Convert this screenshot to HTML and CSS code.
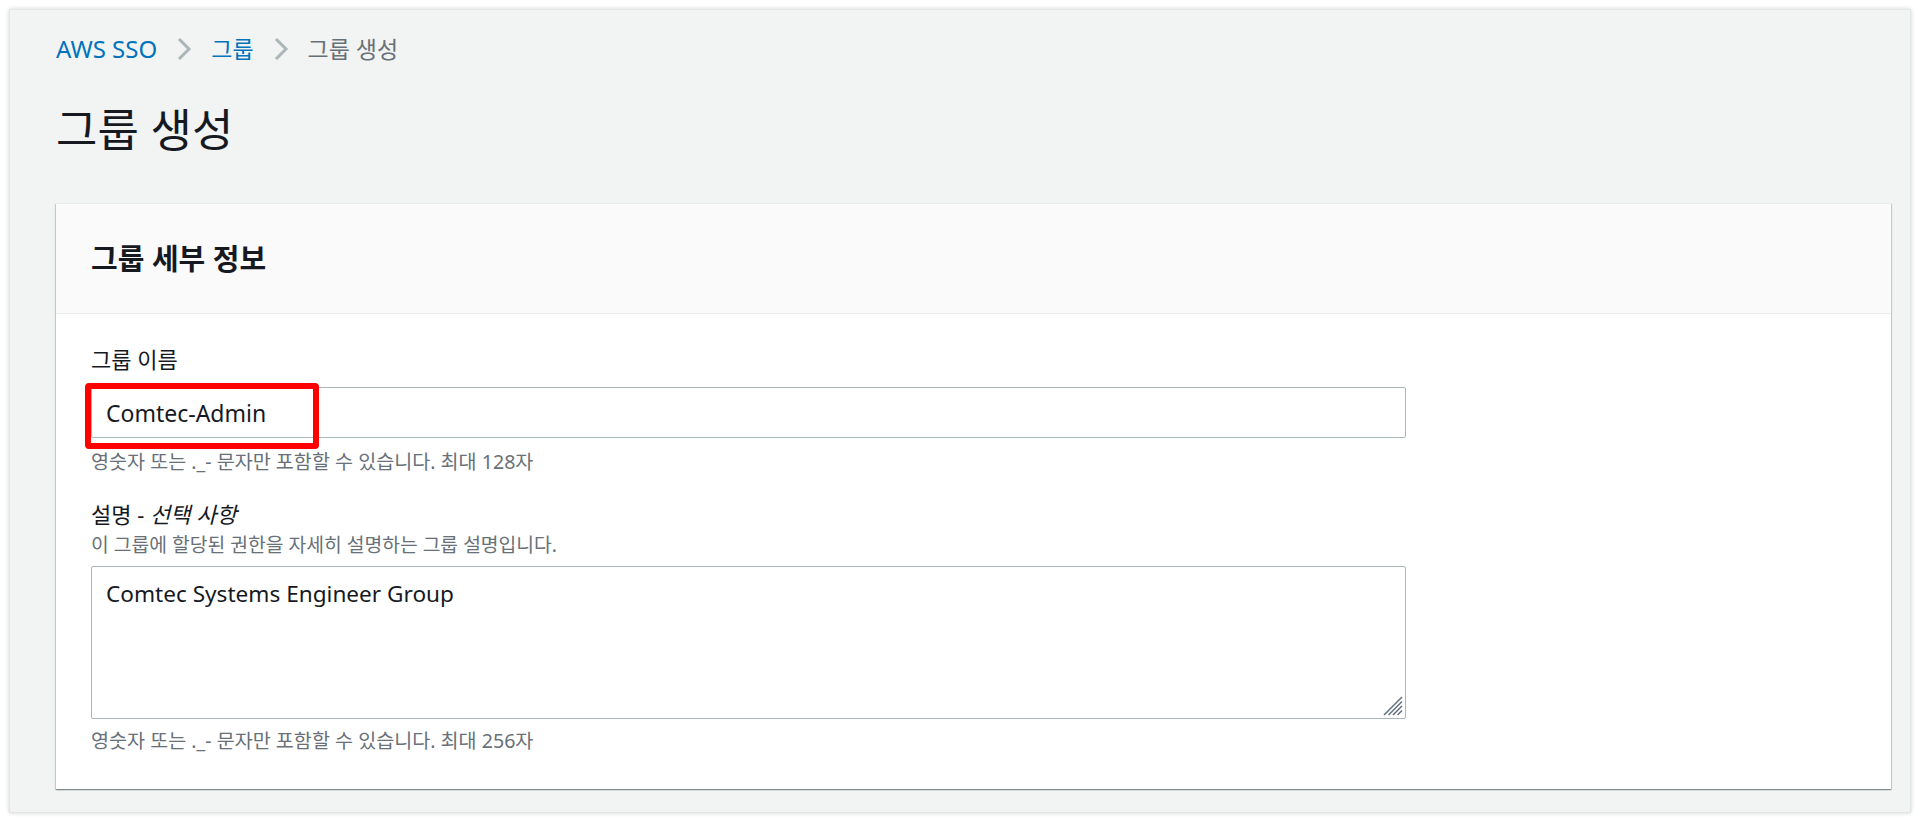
FILE: index.html
```html
<!DOCTYPE html>
<html lang="ko">
<head>
    <meta charset="UTF-8">
    <meta name="viewport" content="width=device-width, initial-scale=1.0">
    <title>그룹 생성</title>
    <link rel="stylesheet" href="styles.css">
</head>
<body>

<div class="frame">
    <nav class="breadcrumb">
        <a href="#" class="root">AWS SSO</a>
        <svg class="chevron" width="16" height="26" viewBox="0 0 16 26"><polyline points="3,3 13,13 3,23" fill="none" stroke="#aab7b8" stroke-width="3"/></svg>
        <a href="#">그룹</a>
        <svg class="chevron" width="16" height="26" viewBox="0 0 16 26"><polyline points="3,3 13,13 3,23" fill="none" stroke="#aab7b8" stroke-width="3"/></svg>
        <span class="current">그룹 생성</span>
    </nav>

    <h1>그룹 생성</h1>

    <div class="card">
        <div class="card-header">
            <h2>그룹 세부 정보</h2>
        </div>
        <form class="card-body">
            <label for="groupName">그룹 이름</label>
            <div class="field">
                <input type="text" id="groupName" name="groupName" value="Comtec-Admin">
                <div class="highlight"></div>
            </div>
            <p class="hint">영숫자 또는 ._- 문자만 포함할 수 있습니다. 최대 128자</p>

            <label for="description" class="label-second">설명 - <i>선택 사항</i></label>
            <p class="desc">이 그룹에 할당된 권한을 자세히 설명하는 그룹 설명입니다.</p>
            <div class="field">
                <textarea id="description" name="description">Comtec Systems Engineer Group</textarea>
                <svg class="grip" width="20" height="20" viewBox="0 0 20 20">
                    <line x1="1" y1="19" x2="19" y2="1" stroke="#5f6b7a" stroke-width="1.5"/>
                    <line x1="5.5" y1="19" x2="19" y2="5.5" stroke="#5f6b7a" stroke-width="1.5"/>
                    <line x1="10" y1="19" x2="19" y2="10" stroke="#5f6b7a" stroke-width="1.5"/>
                    <line x1="14.5" y1="19" x2="19" y2="14.5" stroke="#5f6b7a" stroke-width="1.5"/>
                </svg>
            </div>
            <p class="hint hint-last">영숫자 또는 ._- 문자만 포함할 수 있습니다. 최대 256자</p>
        </form>
    </div>
</div>

</body>
</html>
```

FILE: styles.css
```css
body {
    font-family: "Noto Sans", "Noto Sans CJK KR", sans-serif;
    margin: 0;
    padding: 0;
    background-color: #fff;
    color: #16191f;
}

.frame {
    box-sizing: border-box;
    margin: 9px;
    width: 1902px;
    height: 804px;
    padding: 24px 19px 0 46px;
    background-color: #f2f3f3;
    border: 1px solid #e3e6e6;
    box-shadow: 0 0 4px rgba(0, 0, 0, 0.18);
}

.breadcrumb {
    display: flex;
    align-items: center;
    gap: 19px;
    height: 30px;
    font-size: 23px;
    line-height: 30px;
}

.breadcrumb a {
    color: #0073bb;
    text-decoration: none;
}

.breadcrumb .root {
    font-size: 24px;
}

.breadcrumb .current {
    color: #687078;
}

.chevron {
    display: block;
}

h1 {
    margin: 41px 0 0;
    font-size: 45px;
    font-weight: 400;
    line-height: 50px;
}

.card {
    margin-top: 48px;
    background-color: #fff;
    border-top: 1px solid #eaeded;
    box-shadow: 0 1px 1px 0 rgba(0, 28, 36, 0.3), 1px 1px 1px 0 rgba(0, 28, 36, 0.15), -1px 1px 1px 0 rgba(0, 28, 36, 0.15);
}

.card-header {
    display: flex;
    align-items: center;
    height: 109px;
    padding: 0 35px;
    background-color: #fafafa;
    border-bottom: 1px solid #eaeded;
}

h2 {
    margin: 0;
    font-size: 29px;
    font-weight: 700;
    line-height: 34px;
}

.card-body {
    padding: 31px 35px 36px;
}

label {
    display: block;
    font-size: 22px;
    line-height: 28px;
    margin-bottom: 14px;
}

label i {
    font-style: italic;
}

.label-second {
    margin: 26px 0 0;
}

.field {
    position: relative;
    width: 1315px;
}

input[type="text"],
textarea {
    display: block;
    box-sizing: border-box;
    width: 100%;
    margin: 0;
    padding: 0 14px;
    border: 1px solid #aab7b8;
    border-radius: 2px;
    font-family: inherit;
    font-size: 23px;
    color: #16191f;
    background-color: #fff;
    outline: none;
}

input[type="text"] {
    height: 51px;
}

textarea {
    height: 153px;
    padding-top: 12px;
    line-height: 30px;
    font-size: 22.6px;
    resize: none;
}

.highlight {
    position: absolute;
    left: -6px;
    top: -4px;
    width: 234px;
    height: 66px;
    box-sizing: border-box;
    border: 6px solid #ff0000;
    border-radius: 4px;
}

.grip {
    position: absolute;
    right: 3px;
    bottom: 3px;
}

.hint {
    margin: 12px 0 0;
    font-size: 19.6px;
    line-height: 24px;
    color: #687078;
}

.desc {
    margin: 5px 0 9px;
    font-size: 19.3px;
    line-height: 24px;
    color: #687078;
}

.hint-last {
    margin-top: 10px;
}
```
